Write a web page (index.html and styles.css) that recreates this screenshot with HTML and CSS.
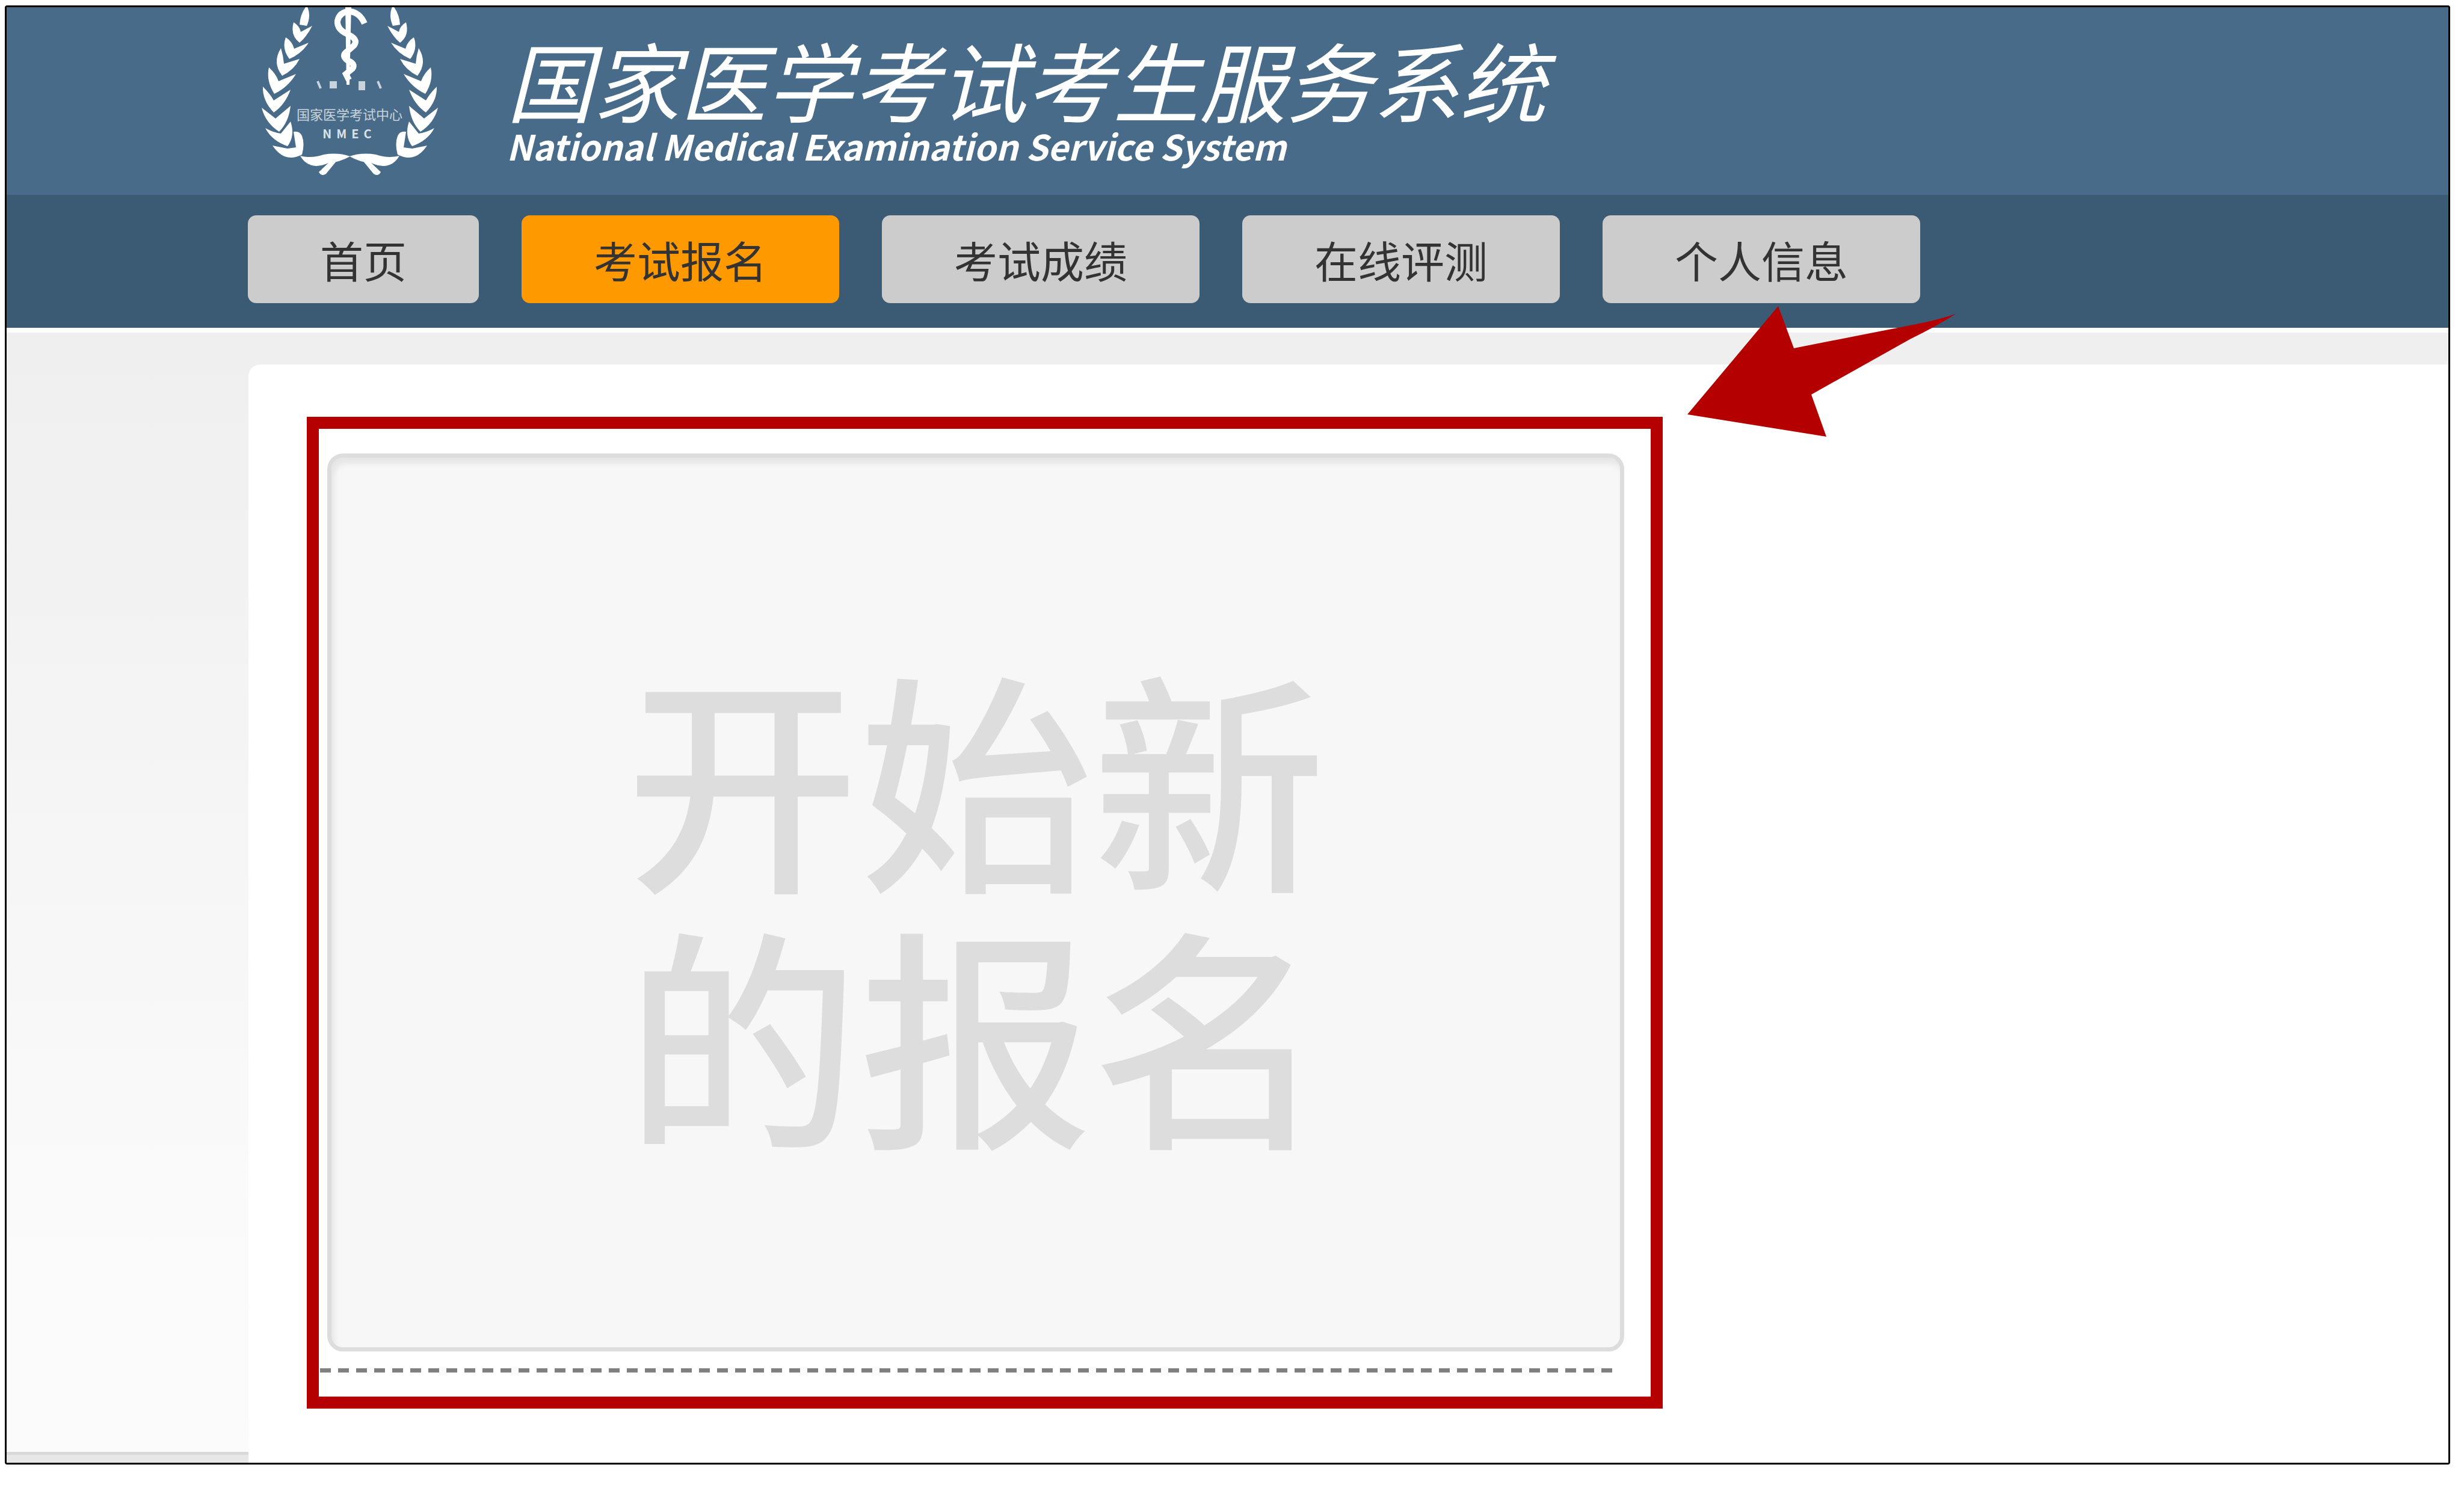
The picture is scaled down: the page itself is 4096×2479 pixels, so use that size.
FILE: index.html
```html
<!DOCTYPE html>
<html lang="zh-CN">
<head>
    <meta charset="UTF-8">
    <meta name="viewport" content="width=device-width, initial-scale=1.0">
    <title>国家医学考试考生服务系统</title>
    <link rel="stylesheet" href="styles.css">
</head>
<body>
    <div class="page">
        <header class="header">
            <svg class="logo" viewBox="0 5 300 294" aria-hidden="true">
                <defs>
                    <!-- left half of the wreath, mirrored for the right half -->
                    <g id="wreath">
                        <path d="M78 2 Q86 18 78 36 L66 34 Q67 16 78 2Z"/>
                        <path d="M56 30 Q66 36 68 46 L87 36 Q78 54 66 64 Q50 52 56 30Z"/>
                        <path d="M43 55 Q54 62 57 74 L81 64 Q70 82 49 91 Q36 74 43 55Z"/>
                        <path d="M35 73 Q39 86 40 99 L66 91 Q57 109 37 119 Q20 97 35 73Z"/>
                        <path d="M15 105 Q27 116 31 128 L60 116 Q47 138 24 149 Q10 127 15 105Z"/>
                        <path d="M5 137 Q17 149 23 160 L51 142 Q42 167 23 180 Q4 160 5 137Z"/>
                        <path d="M3 172 Q17 183 26 190 L51 169 Q48 196 32 212 Q9 197 3 172Z"/>
                        <path d="M9 206 Q24 214 35 215 L51 195 Q59 219 46 236 Q20 227 9 206Z"/>
                        <path d="M21 235 Q36 238 46 240 L60 238 L56 212 Q66 210 70 219 Q75 232 70 250 Q41 265 21 235Z"/>
                        <path d="M67 252 Q86 257 106 250 Q130 246 150 253 Q132 263 114 264 Q82 278 67 252Z"/>
                        <path d="M128 260 L110 282 Q102 287 98 279 L118 260Z"/>
                    </g>
                </defs>
                <use href="#wreath"/>
                <use href="#wreath" transform="translate(299 0) scale(-1 1)"/>
                <path class="staff" d="M142 0 L152 0 L149 134 L144 134Z"/>
                <path class="snake" d="M148 12 Q132 13 129 28 Q128 42 146 50 Q164 58 157 68 Q152 73 143 80 Q136 86 145 93 Q160 99 154 107 L143 116 L148 126"/>
                <path class="snake" d="M150 12 Q166 14 174 32"/>
                <g class="years">
                    <path d="M96 128 L101 140 M118 130 H126 V138 H118Z M166 130 H173 V141 H166Z M196 128 L201 140"/>
                </g>
                <text class="logo-name" x="149" y="192">国家医学考试中心</text>
                <text class="logo-abbr" x="149" y="223">NMEC</text>
            </svg>
            <div class="titles">
                <h1>国家医学考试考生服务系统</h1>
                <p class="subtitle">National Medical Examination Service System</p>
            </div>
        </header>

        <nav class="nav">
            <a href="#">首页</a>
            <a href="#" class="active">考试报名</a>
            <a href="#">考试成绩</a>
            <a href="#">在线评测</a>
            <a href="#">个人信息</a>
        </nav>

        <div class="content">
            <aside class="side"></aside>
            <main class="panel">
                <section class="highlight">
                    <button class="new-signup" type="button">开始新<br>的报名</button>
                    <div class="divider"></div>
                </section>
            </main>
        </div>

        <svg class="arrow" viewBox="0 0 446 218" aria-hidden="true">
            <path d="M0 180 L151 0 L177 70 L380 30 Q420 22 446 13 Q415 33 370 55 L206 147 L231 217Z"/>
        </svg>
    </div>
</body>
</html>
```

FILE: styles.css
```css
* {
    box-sizing: border-box;
}
body {
    margin: 0;
    min-height: 100vh;
    display: flex;
    padding: 9px 23px 44px 8px;
    background: #fff;
    font-family: "Noto Sans CJK SC", sans-serif;
    color: #333;
}
.page {
    position: relative;
    flex: 1;
    display: flex;
    flex-direction: column;
    border: 3px solid #000;
    border-radius: 4px;
}
.header {
    display: flex;
    height: 312px;
    padding-left: 421px;
    gap: 110px;
    background: #476b88;
    color: #fff;
}
.logo {
    width: 300px;
    height: 294px;
    fill: #fff;
}
.snake {
    fill: none;
    stroke: #fff;
    stroke-width: 10;
}
.years {
    fill: #fff;
    stroke: #fff;
    stroke-width: 4;
    opacity: 0.7;
}
.logo-name {
    font-size: 22px;
    text-anchor: middle;
    opacity: 0.7;
}
.logo-abbr {
    font-size: 20px;
    font-weight: bold;
    letter-spacing: 8px;
    text-anchor: middle;
    opacity: 0.8;
}
.titles {
    padding-top: 44px;
}
h1 {
    margin: 0;
    font-size: 144px;
    font-weight: 400;
    font-style: italic;
    line-height: 148px;
    white-space: nowrap;
}
.subtitle {
    margin: 0;
    font-size: 58px;
    font-weight: bold;
    font-style: italic;
    line-height: 76px;
}
.nav {
    display: flex;
    gap: 71px;
    padding: 34px 0 41px 401px;
    background: #3b5a74;
}
.nav a {
    padding: 0 120px;
    border-radius: 14px;
    background: #ccc;
    color: #333;
    font-size: 72px;
    line-height: 146px;
    text-decoration: none;
}
.nav a.active {
    background: #ff9900;
}
.content {
    flex: 1;
    display: flex;
    padding-top: 53px;
    border-top: 8px solid #fff;
    background: linear-gradient(#efefef, #fafafa 75%, #fbfbfb);
}
.side {
    width: 402px;
    align-self: flex-end;
    height: 18px;
    border-top: 5px solid #d9d9d9;
    background: #e7e7e7;
}
.panel {
    flex: 1;
    padding: 87px 97px 80px;
    border-top-left-radius: 20px;
    background: #fff;
}
.highlight {
    width: 2254px;
    padding: 41px 56px 40px 2px;
    border: 20px solid #b50000;
}
.new-signup {
    display: block;
    width: 2156px;
    height: 1493px;
    margin-left: 12px;
    padding: 0 0 6px;
    border: 7px solid #ddd;
    border-radius: 26px;
    background: #f7f7f7;
    box-shadow: inset 5px 10px 8px #e6e6e6;
    color: #ddd;
    font-family: inherit;
    font-size: 388px;
    font-weight: 500;
    line-height: 426px;
    cursor: pointer;
}
.divider {
    height: 7px;
    margin-top: 28px;
    background: repeating-linear-gradient(90deg, #808080 0 18px, #fff 18px 30px);
}
.arrow {
    position: absolute;
    left: 2794px;
    top: 497px;
    width: 446px;
    height: 218px;
    fill: #b50000;
}
```
